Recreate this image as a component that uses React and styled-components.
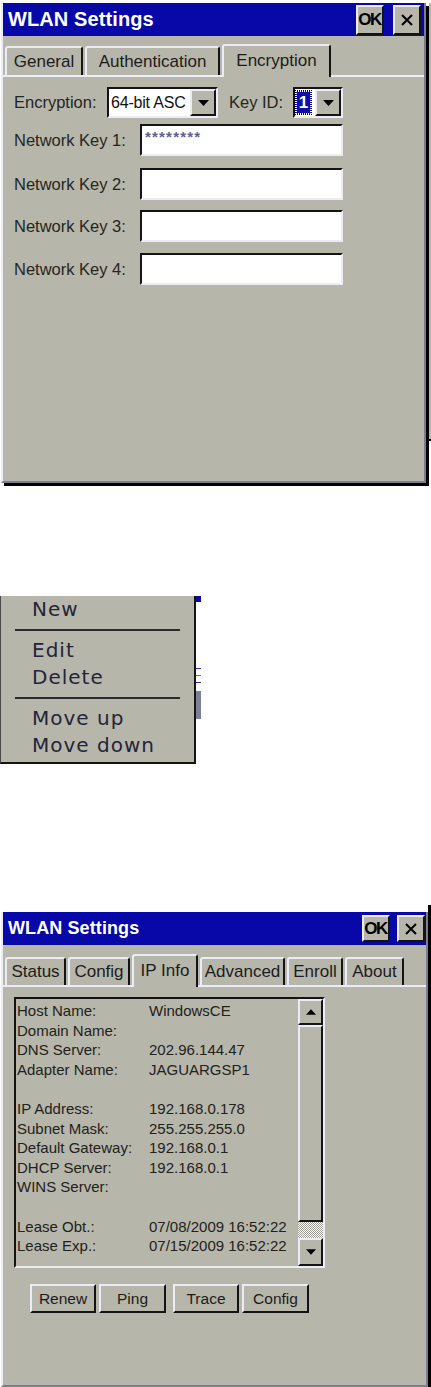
import React from 'react';
import styled, { createGlobalStyle, css } from 'styled-components';

const GRAY = '#b7b6aa';
const BLUE = '#0808a8';
const LIGHT = '#ececf8';
const DARK = '#141414';
const SHADE = '#7d7c8e';

const GlobalStyle = createGlobalStyle`
  html, body {
    margin: 0;
    padding: 0;
    background: #fff;
  }
  body {
    width: 431px;
    height: 1387px;
    overflow: hidden;
    font-family: "Liberation Sans", Arial, sans-serif;
    color: #1c1c1c;
  }
`;

const raised = css`
  border-style: solid;
  border-width: 2px;
  border-color: ${LIGHT} ${DARK} ${DARK} ${LIGHT};
`;

const sunken = css`
  border-style: solid;
  border-width: 2px;
  border-color: ${DARK} ${LIGHT} ${LIGHT} ${DARK};
`;

const Page = styled.div`
  width: 431px;
  display: flex;
  flex-direction: column;
`;

const Screen = styled.div`
  display: flex;
  align-items: flex-start;
  padding-top: ${({ $top }) => $top || 0}px;
  margin-top: ${({ $mt }) => $mt || 0}px;
`;

const Dialog = styled.div`
  margin-left: 1px;
  width: ${({ $w }) => $w}px;
  height: ${({ $h }) => $h}px;
  box-sizing: border-box;
  background: ${GRAY};
  border-left: 2px solid ${LIGHT};
  border-right: 2px solid ${SHADE};
  border-bottom: 2px solid ${SHADE};
  box-shadow: ${({ $shadow }) => ($shadow ? '3px 3px 0 #000' : 'none')};
  display: flex;
  flex-direction: column;
`;

const BackEdge = styled.div`
  margin-left: 3px;
  width: 2px;
  height: 436px;
  background: ${GRAY};
  border-bottom: 2px solid #000;
`;

const DarkEdge = styled.div`
  width: 3px;
  margin-top: -7px;
  height: 482px;
  background: #000;
`;

const TitleBar = styled.div`
  height: 33px;
  flex-shrink: 0;
  background: ${BLUE};
  display: flex;
  align-items: center;
  padding: 0 ${({ $pr }) => $pr}px 0 5px;
`;

const Title = styled.div`
  color: #fff;
  font-weight: bold;
  font-size: ${({ $size }) => $size}px;
  letter-spacing: 0.1px;
`;

const TitleButtons = styled.div`
  margin-left: auto;
  display: flex;
  gap: ${({ $gap }) => $gap}px;
`;

const TitleButton = styled.div`
  ${raised};
  box-sizing: border-box;
  width: 28px;
  height: ${({ $h }) => $h}px;
  background: ${GRAY};
  display: flex;
  align-items: center;
  justify-content: center;
  font-weight: bold;
  font-size: 17px;
  letter-spacing: -1.5px;
  color: #000;
  padding-right: 1px;
`;

const TabStrip = styled.div`
  height: ${({ $h }) => $h}px;
  flex-shrink: 0;
  display: flex;
  align-items: flex-end;
  gap: 2px;
  padding-left: 2px;
`;

const Tab = styled.div`
  box-sizing: border-box;
  width: ${({ $w }) => $w}px;
  border-top: 2px solid ${LIGHT};
  border-left: 2px solid ${LIGHT};
  border-right: 2px solid ${DARK};
  border-radius: 3px 3px 0 0;
  background: ${GRAY};
  display: flex;
  align-items: center;
  justify-content: center;
  font-size: 17px;
  position: relative;
  z-index: ${({ $active }) => ($active ? 1 : 0)};
  margin-bottom: ${({ $active }) => ($active ? -2 : 0)}px;
  height: ${({ $h, $active }) => ($active ? $h + 2 : $h)}px;
  padding-bottom: ${({ $active }) => ($active ? 2 : 0)}px;
`;

const Content = styled.div`
  flex: 1;
  border-top: 2px solid ${LIGHT};
  padding: 10px 0 0 11px;
  display: flex;
  flex-direction: column;
`;

const Row = styled.div`
  display: flex;
  align-items: center;
  margin-top: ${({ $mt }) => $mt || 0}px;
`;

const Label = styled.div`
  width: ${({ $w }) => $w}px;
  margin-left: ${({ $ml }) => $ml || 0}px;
  font-size: 16.5px;
  color: #26261e;
  flex-shrink: 0;
`;

const Combo = styled.div`
  ${sunken};
  box-sizing: border-box;
  width: ${({ $w }) => $w}px;
  height: 31px;
  background: #fff;
  display: flex;
  align-items: center;
`;

const ComboText = styled.div`
  flex: 1;
  white-space: nowrap;
  font-size: 16px;
  letter-spacing: -0.2px;
  padding-left: 2px;
  color: #111;
`;

const Selected = styled.div`
  margin-left: 1px;
  width: 15px;
  height: 23px;
  box-sizing: border-box;
  border: 1px dotted #fff;
  outline: 1px dotted #000;
  background: #1010a0;
  color: #fff;
  font-size: 17px;
  font-weight: bold;
  display: flex;
  align-items: center;
  justify-content: center;
  margin-right: auto;
`;

const DropButton = styled.div`
  ${raised};
  box-sizing: border-box;
  width: 26px;
  height: 27px;
  background: ${GRAY};
  display: flex;
  align-items: center;
  justify-content: center;
`;

const TextField = styled.div`
  ${sunken};
  box-sizing: border-box;
  width: 203px;
  height: 32px;
  background: #fff;
  padding: 3px 3px;
  font-size: 15px;
  font-weight: bold;
  line-height: 15px;
  letter-spacing: 1.2px;
  color: #5f5f96;
`;

const Arrow = ({ up, w = 11, h = 6 }) => (
  <svg width={w} height={h} viewBox="0 0 11 6">
    <path d={up ? 'M0 6 L5.5 0 L11 6 Z' : 'M0 0 L11 0 L5.5 6 Z'} fill="#000" />
  </svg>
);

const CloseIcon = () => (
  <svg width="14" height="14" viewBox="0 0 14 14">
    <path d="M2 2 L12 12 M12 2 L2 12" stroke="#000" strokeWidth="2" />
  </svg>
);

/* context menu */

const Menu = styled.div`
  width: 196px;
  box-sizing: border-box;
  background: ${GRAY};
  border-left: 1px solid #4a4a4a;
  border-right: 2px solid ${DARK};
  border-bottom: 2px solid ${DARK};
  padding-bottom: 3px;
  display: flex;
  flex-direction: column;
`;

const MenuItem = styled.div`
  height: 27px;
  line-height: 27px;
  padding-left: 31px;
  font-family: "DejaVu Sans", Verdana, sans-serif;
  font-size: 20px;
  letter-spacing: 1px;
  color: #24243a;
`;

const MenuSep = styled.div`
  height: 14px;
  display: flex;
  align-items: center;
  padding: 0 14px;
  &::after {
    content: '';
    flex: 1;
    height: 2px;
    background: #2c2c2c;
    margin-top: -1px;
  }
`;

const Behind = styled.div`
  width: 5px;
  height: 168px;
  display: flex;
  flex-direction: column;
`;

const BehindBit = styled.div`
  height: ${({ $h }) => $h}px;
  margin-top: ${({ $mt }) => $mt || 0}px;
  background: ${({ $c }) => $c};
`;

/* IP info */

const ListBox = styled.div`
  ${sunken};
  box-sizing: border-box;
  width: 311px;
  height: 271px;
  display: flex;
`;

const ListText = styled.div`
  flex: 1;
  padding: 2px 0 0 1px;
  font-size: 15px;
  color: #22221c;
`;

const InfoRow = styled.div`
  height: 19.6px;
  line-height: 19.6px;
  display: flex;
  white-space: nowrap;
`;

const InfoKey = styled.div`
  width: 132px;
  flex-shrink: 0;
`;

const ScrollBar = styled.div`
  width: 25px;
  display: flex;
  flex-direction: column;
`;

const ScrollPart = styled.div`
  ${raised};
  box-sizing: border-box;
  height: ${({ $h }) => $h}px;
  background: ${GRAY};
  display: flex;
  align-items: center;
  justify-content: center;
`;

const ScrollTrack = styled.div`
  flex: 1;
  background: repeating-conic-gradient(#fff 0 25%, #9e9d95 0 50%) 0 0 / 2px 2px;
`;

const ButtonRow = styled.div`
  display: flex;
  margin: 16px 0 0 16px;
`;

const PushButton = styled.div`
  ${raised};
  box-sizing: border-box;
  width: ${({ $w }) => $w}px;
  height: 29px;
  margin-left: ${({ $ml }) => $ml || 0}px;
  background: ${GRAY};
  display: flex;
  align-items: center;
  justify-content: center;
  font-size: 15.5px;
  color: #1c1c1c;
`;

const ipInfo = [
  ['Host Name:', 'WindowsCE'],
  ['Domain Name:', ''],
  ['DNS Server:', '202.96.144.47'],
  ['Adapter Name:', 'JAGUARGSP1'],
  ['', ''],
  ['IP Address:', '192.168.0.178'],
  ['Subnet Mask:', '255.255.255.0'],
  ['Default Gateway:', '192.168.0.1'],
  ['DHCP Server:', '192.168.0.1'],
  ['WINS Server:', ''],
  ['', ''],
  ['Lease Obt.:', '07/08/2009 16:52:22'],
  ['Lease Exp.:', '07/15/2009 16:52:22'],
];

function TitleBarRow({ size, pr, gap, btnH }) {
  return (
    <TitleBar $pr={pr}>
      <Title $size={size}>WLAN Settings</Title>
      <TitleButtons $gap={gap}>
        <TitleButton $h={btnH}>OK</TitleButton>
        <TitleButton $h={btnH}>
          <CloseIcon />
        </TitleButton>
      </TitleButtons>
    </TitleBar>
  );
}

export default function App() {
  return (
    <Page>
      <GlobalStyle />

      <Screen $top={3}>
        <Dialog $w={425} $h={480} $shadow>
          <TitleBarRow size={20} pr={3} gap={9} btnH={30} />
          <TabStrip $h={39}>
            <Tab $w={78} $h={29}>General</Tab>
            <Tab $w={135} $h={29}>Authentication</Tab>
            <Tab $w={109} $h={31} $active>Encryption</Tab>
          </TabStrip>
          <Content>
            <Row>
              <Label $w={93}>Encryption:</Label>
              <Combo $w={111}>
                <ComboText>64-bit ASC</ComboText>
                <DropButton>
                  <Arrow />
                </DropButton>
              </Combo>
              <Label $w={64} $ml={11}>Key ID:</Label>
              <Combo $w={50}>
                <Selected>1</Selected>
                <DropButton>
                  <Arrow />
                </DropButton>
              </Combo>
            </Row>
            <Row $mt={6}>
              <Label $w={126}>Network Key 1:</Label>
              <TextField>********</TextField>
            </Row>
            <Row $mt={12}>
              <Label $w={126}>Network Key 2:</Label>
              <TextField />
            </Row>
            <Row $mt={10}>
              <Label $w={126}>Network Key 3:</Label>
              <TextField />
            </Row>
            <Row $mt={11}>
              <Label $w={126}>Network Key 4:</Label>
              <TextField />
            </Row>
          </Content>
        </Dialog>
        <BackEdge />
      </Screen>

      <Screen $mt={113}>
        <Menu>
          <MenuItem>New</MenuItem>
          <MenuSep />
          <MenuItem>Edit</MenuItem>
          <MenuItem>Delete</MenuItem>
          <MenuSep />
          <MenuItem>Move up</MenuItem>
          <MenuItem>Move down</MenuItem>
        </Menu>
        <Behind>
          <BehindBit $c={BLUE} $h={6} />
          <BehindBit $c="#2a2ad0" $h={1} $mt={66} />
          <BehindBit $c="#3a9a3a" $h={1} $mt={6} />
          <BehindBit $c="#2a2ad0" $h={1} $mt={6} />
          <BehindBit $c="#7f7f9a" $h={28} $mt={8} />
        </Behind>
      </Screen>

      <Screen $mt={148}>
        <Dialog $w={427} $h={475}>
          <TitleBarRow size={18} pr={1} gap={7} btnH={27} />
          <TabStrip $h={40}>
            <Tab $w={61} $h={28}>Status</Tab>
            <Tab $w={62} $h={28}>Config</Tab>
            <Tab $w={66} $h={31} $active>IP Info</Tab>
            <Tab $w={85} $h={28}>Advanced</Tab>
            <Tab $w={56} $h={28}>Enroll</Tab>
            <Tab $w={59} $h={28}>About</Tab>
          </TabStrip>
          <Content>
            <ListBox>
              <ListText>
                {ipInfo.map(([key, value], i) => (
                  <InfoRow key={i}>
                    <InfoKey>{key}</InfoKey>
                    <span>{value}</span>
                  </InfoRow>
                ))}
              </ListText>
              <ScrollBar>
                <ScrollPart $h={26}>
                  <Arrow up w={10} h={6} />
                </ScrollPart>
                <ScrollPart $h={197} />
                <ScrollTrack />
                <ScrollPart $h={28}>
                  <Arrow w={10} h={6} />
                </ScrollPart>
              </ScrollBar>
            </ListBox>
            <ButtonRow>
              <PushButton $w={66}>Renew</PushButton>
              <PushButton $w={67} $ml={3}>Ping</PushButton>
              <PushButton $w={66} $ml={7}>Trace</PushButton>
              <PushButton $w={67} $ml={3}>Config</PushButton>
            </ButtonRow>
          </Content>
        </Dialog>
        <DarkEdge />
      </Screen>
    </Page>
  );
}
